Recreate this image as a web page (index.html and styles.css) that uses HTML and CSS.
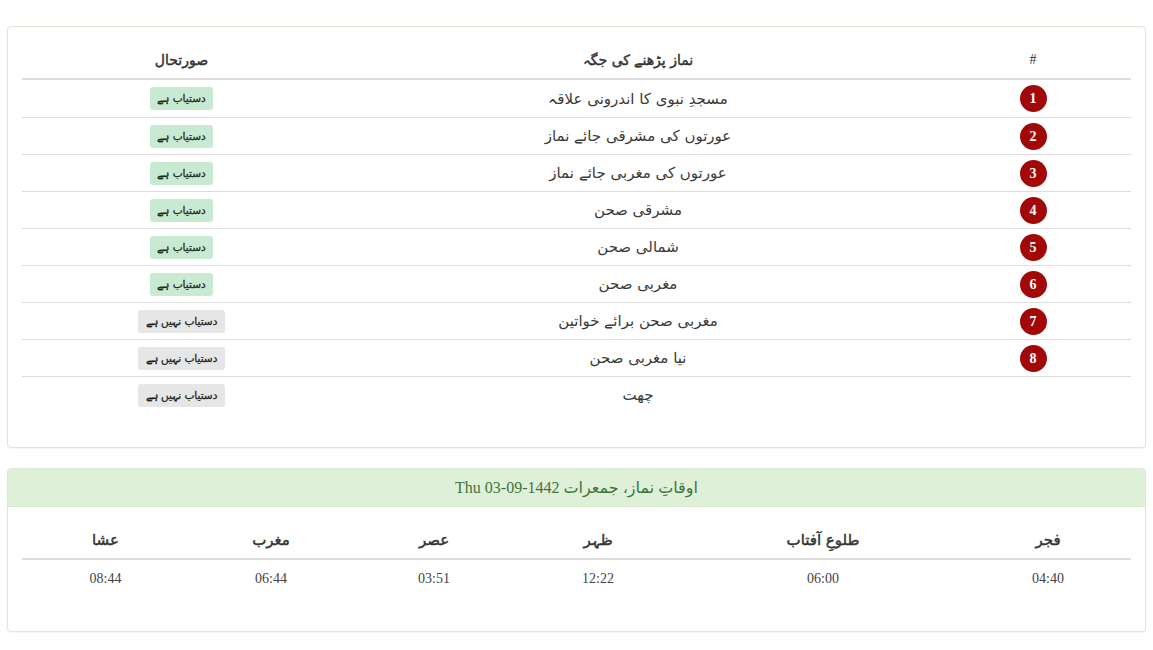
FILE: index.html
```html
<!DOCTYPE html>
<html lang="ur" dir="rtl">
<head>
<meta charset="utf-8">
<title>نماز</title>
<link rel="stylesheet" href="styles.css">
</head>
<body>
<div class="page">
  <div class="panel">
    <div class="panel-body">
      <table class="tbl places">
        <thead>
          <tr><th class="c-num">#</th><th class="c-place">نماز پڑھنے کی جگہ</th><th class="c-status">صورتحال</th></tr>
        </thead>
        <tbody>
          <tr><td><span class="num">1</span></td><td>مسجدِ نبوی کا اندرونی علاقہ</td><td><span class="badge ok">دستیاب ہے</span></td></tr>
          <tr><td><span class="num">2</span></td><td>عورتوں کی مشرقی جائے نماز</td><td><span class="badge ok">دستیاب ہے</span></td></tr>
          <tr><td><span class="num">3</span></td><td>عورتوں کی مغربی جائے نماز</td><td><span class="badge ok">دستیاب ہے</span></td></tr>
          <tr><td><span class="num">4</span></td><td>مشرقی صحن</td><td><span class="badge ok">دستیاب ہے</span></td></tr>
          <tr><td><span class="num">5</span></td><td>شمالی صحن</td><td><span class="badge ok">دستیاب ہے</span></td></tr>
          <tr><td><span class="num">6</span></td><td>مغربی صحن</td><td><span class="badge ok">دستیاب ہے</span></td></tr>
          <tr><td><span class="num">7</span></td><td>مغربی صحن برائے خواتین</td><td><span class="badge no">دستیاب نہیں ہے</span></td></tr>
          <tr><td><span class="num">8</span></td><td>نیا مغربی صحن</td><td><span class="badge no">دستیاب نہیں ہے</span></td></tr>
          <tr><td></td><td>چھت</td><td><span class="badge no">دستیاب نہیں ہے</span></td></tr>
        </tbody>
      </table>
    </div>
  </div>

  <div class="panel panel-success">
    <div class="panel-heading">اوقاتِ نماز، جمعرات 1442-09-03 Thu</div>
    <div class="panel-body">
      <table class="tbl times">
        <thead>
          <tr><th class="t1">فجر</th><th class="t2">طلوعِ آفتاب</th><th class="t3">ظہر</th><th class="t4">عصر</th><th class="t5">مغرب</th><th class="t6">عشا</th></tr>
        </thead>
        <tbody>
          <tr><td>04:40</td><td>06:00</td><td>12:22</td><td>03:51</td><td>06:44</td><td>08:44</td></tr>
        </tbody>
      </table>
    </div>
  </div>
</div>
</body>
</html>
```
FILE: styles.css
```css
html, body {
  margin: 0;
  padding: 0;
  background: #fff;
}
body {
  font-family: "Liberation Serif", "DejaVu Sans", serif;
  font-size: 14px;
  line-height: 20px;
  color: #333;
}
.page {
  padding: 26px 7px 10px 7px;
}
.panel {
  border: 1px solid #e3e3d3;
  border-radius: 4px;
  background: #fff;
  margin-bottom: 20px;
  box-shadow: 0 1px 1px rgba(0,0,0,0.04);
}
.panel-success {
  border-color: #dfe6d4;
}
.panel-heading {
  background: #dff0d8;
  color: #3c763d;
  border-bottom: 1px solid #d6e9c6;
  border-radius: 3px 3px 0 0;
  text-align: center;
  font-size: 16px;
  height: 37px;
  line-height: 37px;
}
.panel-body {
  padding: 14px 14px 34px;
}
.tbl {
  width: 100%;
  border-collapse: collapse;
  table-layout: fixed;
}
.tbl th {
  font-family: "DejaVu Sans", serif;
  font-weight: normal;
  -webkit-text-stroke: 0.45px #333;
  font-size: 14px;
  height: 36px;
  padding: 1px 8px 0;
  vertical-align: middle;
  text-align: center;
  border-bottom: 2px solid #ddd;
  color: #333;
}
.tbl td {
  height: 36px;
  padding: 0 8px;
  vertical-align: middle;
  text-align: center;
  border-top: 1px solid #ddd;
}
.tbl thead + tbody tr:first-child td {
  border-top: none;
  height: 37px;
}
.places th.c-num {
  width: 180px;
  font-family: "Liberation Serif", serif;
  -webkit-text-stroke: 0;
}
.places th.c-place { width: 578px; }
.places td:nth-child(2) {
  font-family: "DejaVu Sans", serif;
  font-size: 15px;
  color: #3a3a3a;
}
.num {
  display: inline-block;
  width: 27px;
  height: 27px;
  line-height: 27px;
  border-radius: 50%;
  background: #a30808;
  color: #fff;
  font-family: "Liberation Serif", serif;
  font-size: 14px;
  font-weight: bold;
  vertical-align: middle;
}
.badge {
  display: inline-block;
  font-family: "DejaVu Sans", sans-serif;
  font-size: 10.5px;
  font-weight: normal;
  -webkit-text-stroke: 0.3px currentColor;
  line-height: 23px;
  padding: 0 7px;
  border-radius: 3px;
  vertical-align: middle;
  color: #1d2b20;
}
.badge.ok {
  background: #c8ead3;
}
.badge.no {
  background: #e6e6e6;
  color: #222;
  padding: 0 8px;
}
.times th {
  font-size: 15px;
}
.times th.t1 { width: 150px; }
.times th.t2 { width: 268px; }
.times th.t3 { width: 150px; }
.times th.t4 { width: 146px; }
.times th.t5 { width: 148px; }
.times td {
  font-size: 14px;
  color: #444;
}
```
